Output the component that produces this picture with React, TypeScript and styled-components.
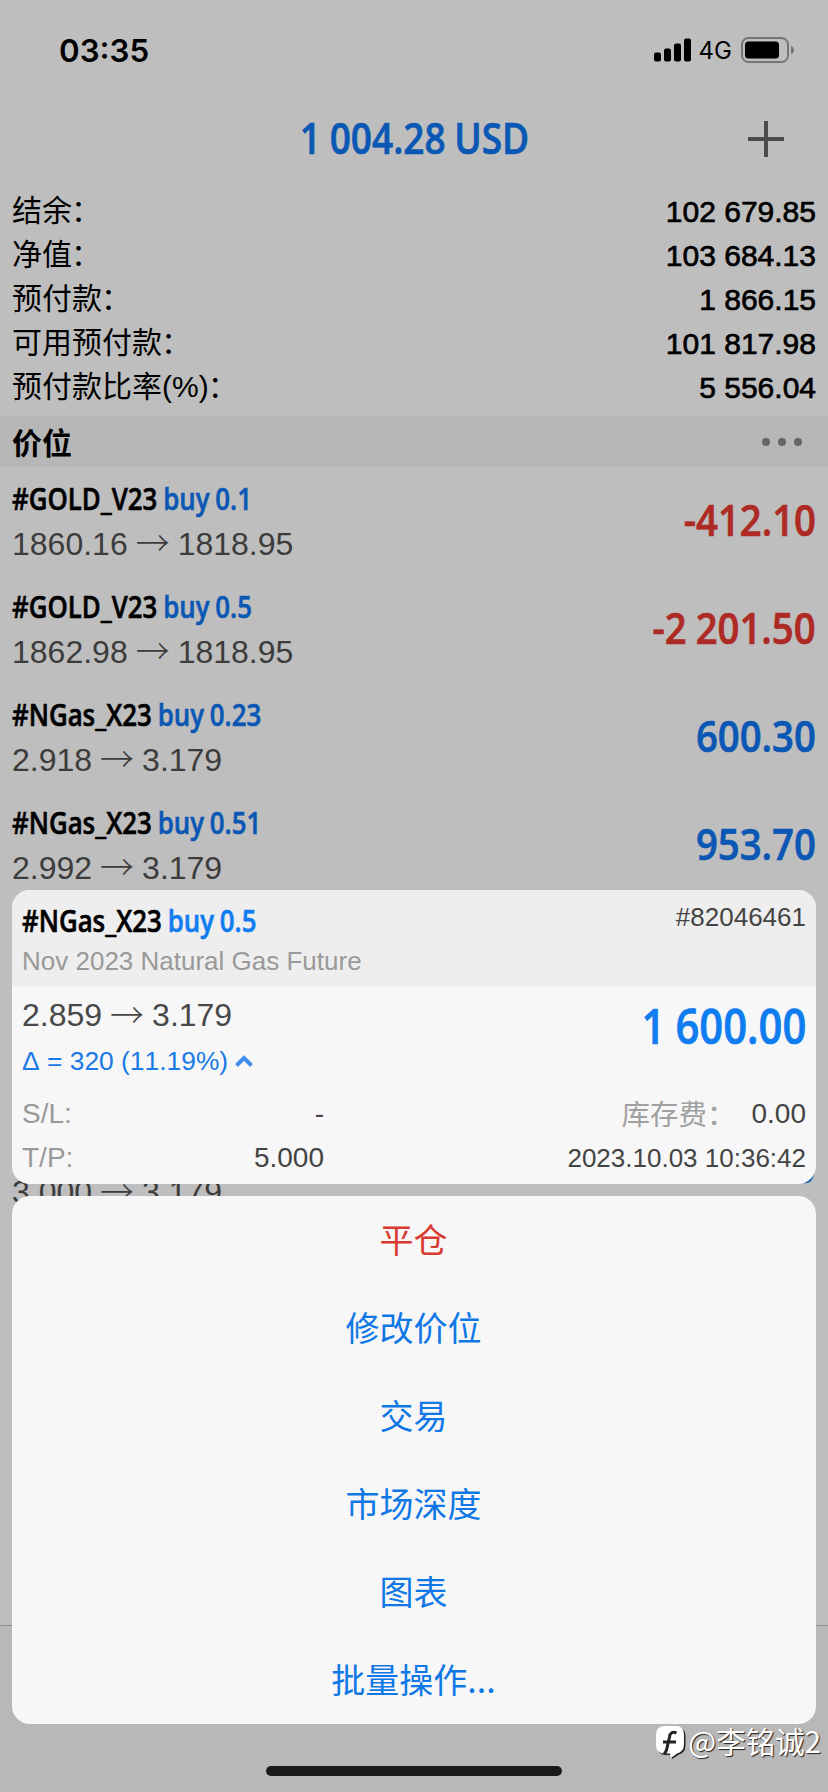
import React from "react";
import styled, { createGlobalStyle } from "styled-components";

const sans = `"Liberation Sans", "Noto Sans CJK SC", sans-serif`;
const cjk = `"Noto Sans CJK SC", sans-serif`;

const GlobalStyle = createGlobalStyle`
  * { box-sizing: border-box; }
  body { margin: 0; background: #bebebe; font-family: ${sans}; font-kerning: none; }
`;

const Screen = styled.main`
  position: relative;
  width: 828px;
  height: 1792px;
  overflow: hidden;
  display: flex;
  flex-direction: column;
  background: #bebebe;
  color: #000;
`;

const StatusBar = styled.header`
  flex: none;
  display: flex;
  justify-content: space-between;
  align-items: center;
  height: 99px;
  padding: 0 34px 0 59px;
`;

const Clock = styled.span`
  margin-top: 2px;
  font: 600 31.3px/40px Inter, sans-serif;
`;

const StatusIcons = styled.div`
  display: flex;
  align-items: center;
`;

const Network = styled.span`
  margin: 2px 9px 0 8px;
  font: 400 24px/30px Inter, sans-serif;
`;

const TitleBar = styled.div`
  flex: none;
  height: 90px;
  display: grid;
  grid-template-columns: 1fr auto 1fr;
  align-items: center;
  padding: 0 44px;
  & > svg { grid-column: 3; justify-self: end; margin-top: -10px; }
`;

const Condensed = styled.span<{ $size: number; $squeeze?: number; $origin?: string; $color?: string }>`
  display: inline-block;
  font: 600 ${(p) => p.$size}px/1.36 "Open Sans", sans-serif;
  color: ${(p) => p.$color ?? "inherit"};
  white-space: nowrap;
  word-spacing: -1px;
  -webkit-text-stroke: 0.7px currentColor;
  transform: scaleX(${(p) => p.$squeeze ?? 0.87});
  transform-origin: ${(p) => p.$origin ?? "left"} center;
`;

const TitleText = styled(Condensed)`
  grid-column: 2;
  margin-top: -12px;
`;

const ProfitText = styled(Condensed)`
  margin-top: -2px;
`;

const SymbolLine = styled(Condensed)`
  margin-top: -1px;
  word-spacing: -1px;
  -webkit-text-stroke-width: 0.6px;
`;

const Summary = styled.dl`
  flex: none;
  margin: 0;
  height: 227px;
  padding: 0 12px;
`;

const SummaryRow = styled.div`
  display: flex;
  justify-content: space-between;
  align-items: center;
  height: 44px;
`;

const SummaryLabel = styled.dt`
  font-size: 30px;
  line-height: 44px;
`;

const Colon = styled.span`
  margin-left: -1px;
`;

const SummaryValue = styled.dd`
  margin: 2px 0 0;
  font-size: 30px;
  line-height: 44px;
  -webkit-text-stroke: 0.7px #000;
`;

const SectionHeader = styled.div`
  flex: none;
  display: flex;
  justify-content: space-between;
  align-items: center;
  height: 51px;
  padding: 0 26px 0 12px;
  background: #b7b7b7;
  font: 700 30px/51px ${cjk};
`;

const Positions = styled.div`
  flex: 1;
  overflow: hidden;
`;

const PositionRow = styled.div`
  display: flex;
  justify-content: space-between;
  align-items: center;
  height: 108px;
  padding: 0 12px;
`;

const CoveredRows = styled.div`
  height: 216px;
`;

const PositionInfo = styled.div`
  display: flex;
  flex-direction: column;
  align-items: flex-start;
  gap: 2px;
  padding-top: 2px;
`;

const PartialRow = styled(PositionRow)`
  align-items: flex-start;
`;

const PartialPrice = styled.div`
  padding-top: 55px;
`;

const PartialProfit = styled.div`
  padding-top: 22px;
`;

const Side = styled.span`
  color: var(--buy, #0a57b4);
`;

const Price = styled.div<{ $color?: string }>`
  display: flex;
  align-items: center;
  font-size: 32px;
  line-height: 44px;
  color: ${(p) => p.$color ?? "#3c3c3c"};
`;

const Arrow = styled.span`
  width: 50px;
  margin-top: -3px;
  text-align: center;
  font: 300 34px/44px ${cjk};
`;

const TabBar = styled.div`
  flex: none;
  height: 167px;
  border-top: 1px solid #8a8a8a;
  background: #b8b8b8;
`;

const Overlay = styled.div`
  position: absolute;
  left: 12px;
  right: 12px;
  top: 890px;
  display: flex;
  flex-direction: column;
  gap: 12px;
`;

const Card = styled.section`
  --buy: #0f7cf0;
  height: 294px;
  border-radius: 18px;
  overflow: hidden;
  background: #f7f7f7;
  color: #444;
`;

const CardHeader = styled.div`
  display: flex;
  justify-content: space-between;
  height: 96px;
  padding: 10px 10px 0;
  background: #eee;
`;

const CardTitle = styled.div`
  display: flex;
  flex-direction: column;
  align-items: flex-start;
  color: #000;
`;

const Description = styled.div`
  font-size: 26px;
  line-height: 40px;
  color: #999;
`;

const Ticket = styled.div`
  margin-top: -1px;
  font-size: 26px;
  line-height: 36px;
`;

const CardBody = styled.div`
  display: flex;
  justify-content: space-between;
  height: 107px;
  padding: 7px 10px 0;
`;

const Delta = styled.div`
  display: flex;
  align-items: center;
  gap: 7px;
  margin-top: 2px;
  font-size: 26.4px;
  line-height: 44px;
  color: #1a7ae6;
`;

const Details = styled.div`
  display: grid;
  grid-template-columns: 302px 1fr;
  grid-auto-rows: 44px;
  margin-top: -1px;
  padding: 0 10px;
  font-size: 28px;
  line-height: 44px;
`;

const Detail = styled.div<{ $end?: boolean }>`
  display: flex;
  justify-content: ${(p) => (p.$end ? "flex-end" : "space-between")};
`;

const Muted = styled.span`
  color: #999;
`;

const SwapLabel = styled(Muted)`
  font: 400 28.5px/42px ${cjk};
  color: #a0a0a0;
  margin-right: 16px;
`;

const OpenTime = styled.span`
  font-size: 26px;
`;

const ActionSheet = styled.nav`
  display: flex;
  flex-direction: column;
  border-radius: 18px;
  background: #f7f7f7;
`;

const Action = styled.button<{ $danger?: boolean }>`
  height: 88px;
  padding: 0 1px 0 0;
  border: 0;
  background: none;
  font: 400 34px/86px ${cjk};
  color: ${(p) => (p.$danger ? "#d93a32" : "#0f78e6")};
`;

const ActionLabel = styled.span`
  display: block;
  height: 88px;
`;

const HomeIndicator = styled.div`
  position: absolute;
  left: 266px;
  top: 1766px;
  width: 296px;
  height: 10px;
  border-radius: 5px;
  background: #1a1a1a;
`;

const Watermark = styled.div`
  position: absolute;
  right: 7px;
  top: 1720px;
  display: flex;
  align-items: center;
  gap: 2px;
  font: 400 29.5px/40px ${cjk};
  color: #fff;
  text-shadow: 1px 1px 1px #222;
  & > svg { margin-top: 4px; }
`;

const BLUE = "#0a57b4";
const RED = "#ae2a24";

const summary = [
  ["结余", "102 679.85"],
  ["净值", "103 684.13"],
  ["预付款", "1 866.15"],
  ["可用预付款", "101 817.98"],
  ["预付款比率(%)", "5 556.04"],
];

const positions = [
  { symbol: "#GOLD_V23", side: "buy 0.1", open: "1860.16", now: "1818.95", profit: "-412.10" },
  { symbol: "#GOLD_V23", side: "buy 0.5", open: "1862.98", now: "1818.95", profit: "-2 201.50" },
  { symbol: "#NGas_X23", side: "buy 0.23", open: "2.918", now: "3.179", profit: "600.30" },
  { symbol: "#NGas_X23", side: "buy 0.51", open: "2.992", now: "3.179", profit: "953.70" },
];

const actions = ["平仓", "修改价位", "交易", "市场深度", "图表", "批量操作..."];

function SignalIcon() {
  return (
    <svg width="37" height="24" viewBox="0 0 37 24">
      <rect x="0" y="14.5" width="7" height="9" rx="2" />
      <rect x="10" y="10.5" width="7" height="13" rx="2" />
      <rect x="20" y="5.5" width="7" height="18" rx="2" />
      <rect x="30" y="0.5" width="7" height="23" rx="2" />
    </svg>
  );
}

function BatteryIcon() {
  return (
    <svg width="53" height="26" viewBox="0 0 53 26">
      <rect x="1" y="1" width="46" height="24" rx="6.5" fill="none" stroke="#757575" strokeWidth="2" />
      <rect x="4" y="4.5" width="34" height="17" rx="3.5" />
      <path d="M50 9 Q53 10 53 13 Q53 16 50 17 Z" fill="#757575" />
    </svg>
  );
}

function Quote({ open, now, color }: { open: string; now: string; color?: string }) {
  return (
    <Price $color={color}>
      {open}
      <Arrow>→</Arrow>
      {now}
    </Price>
  );
}

function Position({ data }: { data: (typeof positions)[number] }) {
  return (
    <PositionRow>
      <PositionInfo>
        <SymbolLine $size={31} $squeeze={0.833}>
          {data.symbol} <Side>{data.side}</Side>
        </SymbolLine>
        <Quote open={data.open} now={data.now} />
      </PositionInfo>
      <ProfitText $size={44} $origin="right" $color={data.profit.startsWith("-") ? RED : BLUE}>
        {data.profit}
      </ProfitText>
    </PositionRow>
  );
}

export default function App() {
  return (
    <Screen>
      <GlobalStyle />
      <StatusBar>
        <Clock>03:35</Clock>
        <StatusIcons>
          <SignalIcon />
          <Network>4G</Network>
          <BatteryIcon />
        </StatusIcons>
      </StatusBar>
      <TitleBar>
        <TitleText $size={44} $squeeze={0.84} $origin="center" $color={BLUE}>1 004.28 USD</TitleText>
        <svg width="36" height="36" viewBox="0 0 36 36" stroke="#4b4b4b" strokeWidth="4">
          <path d="M18 0V36M0 18H36" />
        </svg>
      </TitleBar>
      <Summary>
        {summary.map(([label, value]) => (
          <SummaryRow key={label}>
            <SummaryLabel>{label}<Colon>：</Colon></SummaryLabel>
            <SummaryValue>{value}</SummaryValue>
          </SummaryRow>
        ))}
      </Summary>
      <SectionHeader>
        价位
        <svg width="40" height="8" viewBox="0 0 40 8" fill="#666">
          <circle cx="4" cy="4" r="4" />
          <circle cx="20" cy="4" r="4" />
          <circle cx="36" cy="4" r="4" />
        </svg>
      </SectionHeader>
      <Positions>
        {positions.map((p) => (
          <Position key={p.open} data={p} />
        ))}
        <CoveredRows />
        <PartialRow>
          <PartialPrice>
            <Quote open="3.000" now="3.179" />
          </PartialPrice>
          <PartialProfit>
            <Condensed $size={44} $origin="right" $color={BLUE}>89.50</Condensed>
          </PartialProfit>
        </PartialRow>
      </Positions>
      <TabBar />
      <Overlay>
        <Card>
          <CardHeader>
            <CardTitle>
              <SymbolLine $size={31} $squeeze={0.833}>
                #NGas_X23 <Side>buy 0.5</Side>
              </SymbolLine>
              <Description>Nov 2023 Natural Gas Future</Description>
            </CardTitle>
            <Ticket>#82046461</Ticket>
          </CardHeader>
          <CardBody>
            <div>
              <Quote open="2.859" now="3.179" color="#484848" />
              <Delta>
                Δ = 320 (11.19%)
                <svg width="18" height="12" viewBox="0 0 18 12" fill="none" stroke="#3f8fee" strokeWidth="4">
                  <path d="M1.5 10.5L9 3L16.5 10.5" />
                </svg>
              </Delta>
            </div>
            <Condensed $size={48} $origin="right" $color="#0f7cf0">1 600.00</Condensed>
          </CardBody>
          <Details>
            <Detail><Muted>S/L:</Muted><span>-</span></Detail>
            <Detail $end><SwapLabel>库存费：</SwapLabel><span>0.00</span></Detail>
            <Detail><Muted>T/P:</Muted><span>5.000</span></Detail>
            <Detail $end><OpenTime>2023.10.03 10:36:42</OpenTime></Detail>
          </Details>
        </Card>
        <ActionSheet>
          {actions.map((label, i) => (
            <Action key={label} $danger={i === 0}>
              <ActionLabel>{label}</ActionLabel>
            </Action>
          ))}
        </ActionSheet>
      </Overlay>
      <HomeIndicator />
      <Watermark>
        <svg width="30" height="33" viewBox="0 0 30 33">
          <path d="M10 1.5H21Q29.5 1.5 29.5 10V19Q29.5 27 23 28.5L16 33L15 29H10Q2 29 2 20V10Q2 1.5 10 1.5Z" fill="#222" />
          <path d="M9 0H20Q28 0 28 9V18Q28 26 21 27.5L15 32L14 27.5H9Q0 27.5 0 19V9Q0 0 9 0Z" fill="#fff" />
          <path d="M20.500 7Q14.500 4.500 13.500 11L11 22Q10 26.500 8 28M7 16H20" fill="none" stroke="#222" strokeWidth="3" />
        </svg>
        <span>@李铭诚2</span>
      </Watermark>
    </Screen>
  );
}
